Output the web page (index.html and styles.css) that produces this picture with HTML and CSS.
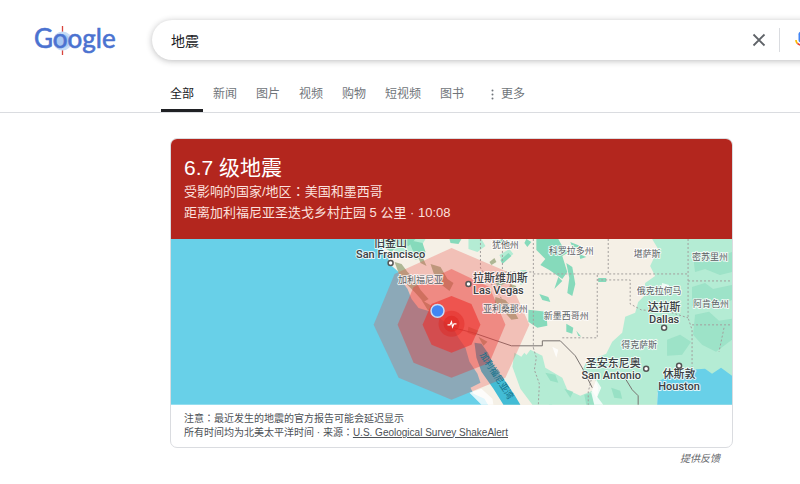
FILE: index.html
```
<!DOCTYPE html>
<html lang="zh-CN">
<head>
    <meta charset="UTF-8">
    <meta name="viewport" content="width=device-width, initial-scale=1.0">
    <title>地震 - Google 搜索</title>
    <link rel="stylesheet" href="styles.css">
</head>
<body>

<header class="header">
    <a class="logo" href="#" aria-label="Google">
        <svg width="86" height="36" viewBox="0 0 86 36">
            <path d="M28.500 4v6M28.500 27v6" stroke="#d9443c" stroke-width="1.300"/>
            <circle cx="28.500" cy="19" r="9.500" fill="#c6dcf6"/>
            <circle cx="28.500" cy="19" r="7" fill="#a9c8f1"/>
            <text class="logo-text" x="0" y="26">Google</text>
        </svg>
    </a>
    <form class="search">
        <input class="search-input" type="text" value="地震" aria-label="搜索">
        <button class="icon-button clear" type="button" aria-label="清除">
            <svg width="14" height="14" viewBox="0 0 14 14"><path d="M1.500 1.500l11 11M12.500 1.500l-11 11" stroke="#5f6368" stroke-width="1.800" fill="none"/></svg>
        </button>
        <button class="icon-button mic" type="button" aria-label="语音搜索">
            <svg width="20" height="20" viewBox="0 0 24 24">
                <path fill="#4285f4" d="M12 15c1.660 0 3-1.310 3-2.970V5c0-1.660-1.340-3-3-3S9 3.340 9 5v7.030C9 13.690 10.340 15 12 15z"/>
                <path fill="#34a853" d="M11 18.100h2V22h-2z"/>
                <path fill="#fbbc04" d="M7.050 16.870C5.780 15.600 5 13.990 5 12.030H7c0 1.450.560 2.420 1.470 3.380z"/>
                <path fill="#ea4335" d="M12 16.930a4.970 5.250 0 0 1-3.540-1.550l-1.410 1.490C8.310 18.150 10.050 19 12 19c3.870 0 7-2.920 7-6.970h-2c0 2.920-2.240 4.900-5 4.900z"/>
            </svg>
        </button>
    </form>
</header>

<nav class="tabs">
    <a class="tab active" href="#">全部</a>
    <a class="tab" href="#">新闻</a>
    <a class="tab" href="#">图片</a>
    <a class="tab" href="#">视频</a>
    <a class="tab" href="#">购物</a>
    <a class="tab" href="#">短视频</a>
    <a class="tab" href="#">图书</a>
    <button class="more" type="button">
        <svg width="3" height="11" viewBox="0 0 3 11" fill="#70757a"><circle cx="1.500" cy="1.500" r="1"/><circle cx="1.500" cy="5.500" r="1"/><circle cx="1.500" cy="9.500" r="1"/></svg>
        更多
    </button>
</nav>

<main class="results">
    <section class="card">
        <div class="alert">
            <h1>6.7 级地震</h1>
            <p>受影响的国家/地区<span class="colon" lang="zh-TW">：</span>美国和墨西哥</p>
            <p>距离加利福尼亚圣迭戈乡村庄园 5 公里 · 10:08</p>
        </div>
        <svg class="map" viewBox="170 239 562 166" role="img" aria-label="震中地图">
            <rect x="170" y="239" width="562" height="166" fill="#68d0e8"/>

            <!-- land -->
            <path fill="#f5f0e6" d="M378 239l4 10 5 6 2 9 9 8 3 9 6 8 4 10 7 9 16 5 7 7 11 7 6 11 7 10 4 14 8 12 3 9-10 5 3 6 11 5 7 12h241V239z"/>

            <!-- forests and green plains -->
            <g fill="#b4ecd4">
                <path d="M652 239l6 10-8 17 5 10-10 7-1 13-6 6-3 11-10 4-3 16-10 9-6 12-20 8-4 9 12 6 4 11-2 17h61v-12l25-17 20-3 30 8V239z"/>
                <path d="M530 350l12 6 3 12 17 10 5 12 13 6 12-5 8 14h-51l-10-12-9-18-12-9z"/>
                <path d="M514 353l7 4 3-4 9 10 3 12 10 13 6 17h-20l-12-16-8-22z"/>
                <path d="M390 239h35l-6 10 5 8-9 3-8-8-12 2zM468 239h13l4 7-8 6-9-3zM499 255l10-6 4 5-11 8zM520 270h6v12l-6 3z"/>
            </g>
            <g fill="#86dabb">
                <path d="M380 239h35l-7 7-10-2-7 8-9-5zM408 240l14 3 3 9-6 6-7-8zM449 239h12l-3 5-8-1z"/>
                <path d="M536 239h22l5 9 6 4-7 4 5 16-5 7-13-9-9-5 5-6-9-9zM566 263l6 4 3 17-3 12-5-3 2-15zM558 277l4 4-8 8zM539 294l9 3 2 5-8-2zM528 310l18 2 1 14-10 2-9-6zM566 324l7 4-1 6-6-2zM576 331l5 6-3-1zM598 278h8v4h-8zM570 242l10 4-7 3zM579 254l7 3-6 2z"/>
                <path d="M500 260l8-7 3 3-9 8zM495 283l6-4 4 4-7 4zM526 239l5 3-4 5-3-4zM497 241l5-2 2 3-5 3z"/>
                <path opacity=".5" d="M693 255l12-3 15 5 12-5v20l-12 3-15-6-10 3zM692 287l13-4 8 6 19-4v15l-18 7-10-4-12 3zM695 315l14-3 10 9 13-2v21l-16 12-14-7-9-10zM667 340l13-5 11 7-9 13-15 1z"/>
                <path opacity=".6" d="M545 373l10 2 3 8-8-2zM564 389l9 3-3 6zM584 395l8-2 2 12h-8zM611 388l9 3 2 8-8-1z"/>
            </g>
            <g fill="#aeb795">
                <path d="M394 262l7 2 6 8 7 7 6 11 8 9-5 3-9-10-9-9-7-10zM430 264l10 3 7 12 6 4-4 8-9-7-7-11zM416 253l6 4 4 9-6-3zM495 297l10 3 7 8 6 11-7 1-8-9-9-5z"/>
                <path d="M421 300l14 8 8 3-4 5-12-6zM468 327l10 4-3 5-8-3zM478 337l9 5-4 4zM489 262l5-4 2 4-5 3zM510 284l6 2-3 6-5-3z"/>
            </g>
            <g fill="#fff" opacity=".8">
                <path d="M469 393l12-4 11 10 1 6h-12zM552 347l6 3-2 8zM596 380l5 8-4 9 6 8h-9l-3-12zM662 283l7 2-2 7-6-2z"/>
            </g>

            <!-- Gulf of California and Gulf of Mexico -->
            <path fill="#42bcd5" d="M474 343l7 1 7 10 6 13 12 16 8 12 6 10h-17l-10-16-12-17-5-14z"/>
            <path fill="#68d0e8" d="M657 405l1-23 12-7 8-2 12-3 15-1 7 5 9-6 11 8v29z"/>

            <!-- state lines -->
            <g fill="none" stroke="#a39f9d" stroke-width="1" stroke-dasharray="2 2">
                <path d="M480 239v29l22 32M533 239v109M533 348l3 10-2 12 5 14-1 21M502 239v33h31M533 274h155M608 239v35M597 275v63h-37M597 280h33v24l11 6 28 2 19 6M688 239v79l4 12v37M688 281h42M692 325h40M724 328l-5 24M591 380l-3 12v13"/>
            </g>
            <path fill="none" stroke="#77716e" d="M453 328l20 5 38 13h31v-5h18l15 15 8 14 9 18M624 377l8 13 6 6v9"/>

            <!-- shaking intensity -->
            <path fill="#e9443e" fill-opacity=".28" d="M451 248l54 23 24 54-24 53-54 22-53-22-25-53 21-51z"/>
            <path fill="#e9332f" fill-opacity=".38" d="M451 269l38 18 16 38-16 38-38 15-38-15-16-38 16-38z"/>
            <path fill="#ee2c29" fill-opacity=".58" d="M451 296l20 8 9 21-9 20-20 8-20-8-9-20 9-21z"/>
            <circle cx="451" cy="324" r="13" fill="#de231f" fill-opacity=".4"/>
            <circle cx="451" cy="324" r="8" fill="#de231f" fill-opacity=".5"/>
            <path fill="none" stroke="#fff" stroke-width="1.200" d="M447 325h2.500l1.500-3 1 5 1.500-3h2.500"/>
            <circle cx="437" cy="311" r="6.500" fill="#4286f3" stroke="#c8dcf5" stroke-width="1.500"/>

            <g class="state">
                <text x="420" y="283">加利福尼亚</text>
                <text x="505" y="248">犹他州</text>
                <text x="571" y="254">科罗拉多州</text>
                <text x="647" y="257">堪萨斯</text>
                <text x="710" y="260">密苏里州</text>
                <text x="505" y="312">亚利桑那州</text>
                <text x="566" y="319">新墨西哥州</text>
                <text x="659" y="294">俄克拉何马</text>
                <text x="711" y="307">阿肯色州</text>
                <text x="639" y="348">得克萨斯</text>
            </g>
            <text class="gulf" transform="translate(479 355) rotate(57)">加利福尼亚湾</text>
            <g class="city">
                <text x="390" y="247">旧金山</text>
                <text x="390" y="258">San Francisco</text>
                <text x="500" y="282">拉斯维加斯</text>
                <text x="498" y="294">Las Vegas</text>
                <text x="664" y="311">达拉斯</text>
                <text x="664" y="323">Dallas</text>
                <text x="613" y="367">圣安东尼奥</text>
                <text x="611" y="379">San Antonio</text>
                <text x="679" y="378">休斯敦</text>
                <text x="679" y="390">Houston</text>
            </g>
            <g fill="#fff" stroke="#555" stroke-width="1.500">
                <circle cx="390" cy="263" r="2.500"/><circle cx="468" cy="284" r="2.500"/><circle cx="664" cy="328" r="2.500"/><circle cx="646" cy="369" r="2.500"/><circle cx="679" cy="366" r="2.500"/>
            </g>
        </svg>
        <div class="notes">
            <p>注意<span class="colon" lang="zh-TW">：</span>最近发生的地震的官方报告可能会延迟显示</p>
            <p>所有时间均为北美太平洋时间 · 来源<span class="colon" lang="zh-TW">：</span><a href="#">U.S. Geological Survey ShakeAlert</a></p>
        </div>
    </section>
    <a class="feedback" href="#">提供反馈</a>
</main>

</body>
</html>
```
FILE: styles.css
```
* {
    box-sizing: border-box;
}
body {
    margin: 0;
    background: #fff;
    color: #202124;
    font-family: "Liberation Sans", Arial, "Noto Sans CJK SC", sans-serif;
}
h1, p {
    margin: 0;
    font-weight: 400;
}
button {
    border: 0;
    padding: 0;
    background: none;
    font-family: inherit;
}
.header {
    display: flex;
    align-items: center;
    padding: 20px 0 10px 34px;
    overflow: hidden;
}
.logo {
    display: flex;
    width: 118px;
    flex: none;
}
.logo-text {
    font-family: Lato, sans-serif;
    font-size: 26px;
    fill: #4b72d0;
    stroke: #4b72d0;
    stroke-width: 0.6px;
}
.search {
    display: flex;
    align-items: center;
    flex: 1;
    min-width: 0;
    height: 40px;
    /* the pill runs past the right edge of the window */
    margin-right: -64px;
    padding: 0 42px 0 19px;
    border-radius: 20px;
    box-shadow: 0 1px 6px rgba(32, 33, 36, 0.3);
}
.search-input {
    flex: 1;
    min-width: 0;
    border: 0;
    padding: 0;
    outline: none;
    background: none;
    color: #202124;
    font-family: inherit;
    font-size: 14px;
}
.icon-button {
    display: flex;
    align-items: center;
    justify-content: center;
    height: 24px;
}
.clear {
    width: 42px;
    border-right: 1px solid #dadce0;
}
.mic {
    width: 42px;
}
.tabs {
    display: flex;
    gap: 19px;
    height: 43px;
    padding: 6px 0 0 161px;
    border-bottom: 1px solid #dadce0;
}
.tab, .more {
    display: flex;
    color: #70757a;
    font-size: 12px;
    line-height: 36px;
    text-decoration: none;
}
.active {
    margin-right: -9px;
    padding: 0 9px;
    border-bottom: 3px solid #202124;
    color: #202124;
}
.more {
    align-items: center;
    gap: 7px;
    margin-left: 8px;
}
.results {
    display: flex;
    flex-direction: column;
    max-width: 733px;
    padding: 25px 0 0 170px;
}
.card {
    border: 1px solid #dadce0;
    border-radius: 7px;
    overflow: hidden;
}
.alert {
    padding: 16px 13px;
    background: #b3261e;
    color: #fce0dd;
    font-size: 13px;
    line-height: 21px;
}
.alert h1 {
    color: #fff;
    font-size: 21px;
    line-height: 26px;
}
/* centred full-width colon */
.colon {
    font-family: "Noto Sans CJK TC", sans-serif;
    line-height: 1;
}
.map {
    display: block;
    width: 100%;
}
.map text {
    paint-order: stroke;
    stroke: #fff;
    stroke-opacity: 0.8;
    stroke-width: 2px;
    stroke-linejoin: round;
}
.state {
    fill: #5c6064;
    font-size: 9px;
    text-anchor: middle;
}
.city {
    fill: #3c4043;
    font-family: Roboto, "Noto Sans CJK SC", sans-serif;
    font-size: 11px;
    font-weight: 500;
    text-anchor: middle;
}
.map .gulf {
    fill: #16718b;
    font-size: 9px;
    stroke: none;
}
.notes {
    padding: 7px 13px;
    color: #4d5156;
    font-size: 10px;
    line-height: 14px;
}
.notes a {
    color: inherit;
}
.feedback {
    align-self: flex-end;
    margin-right: 13px;
    color: #5f6368;
    font-size: 10px;
    font-style: italic;
    line-height: 22px;
    text-decoration: none;
}
```
